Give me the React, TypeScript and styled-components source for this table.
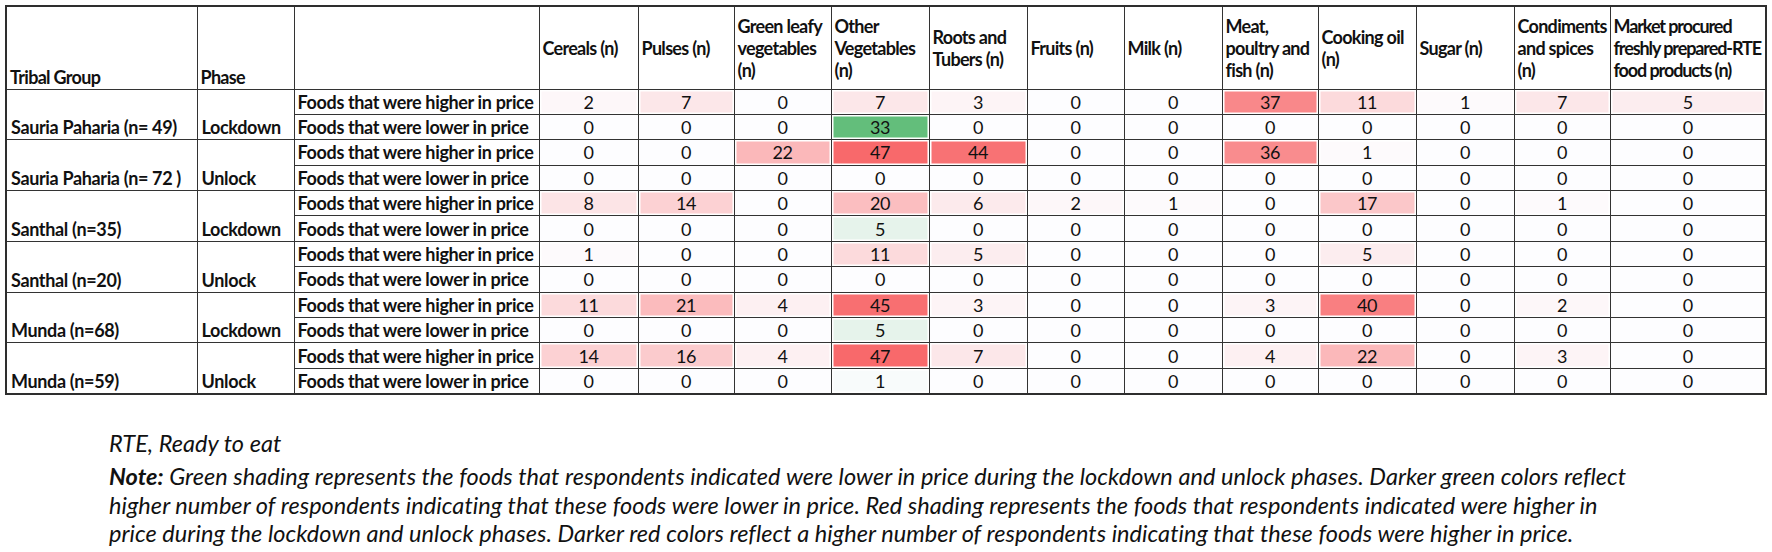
import React from "react";
import styled, { createGlobalStyle } from "styled-components";

const GlobalStyle = createGlobalStyle`
  html, body { margin: 0; padding: 0; background: #ffffff; }
  body { font-family: Lato, "Open Sans", Arial, sans-serif; color: #111; }
`;

const Page = styled.div`
  width: 1772px;
  height: 552px;
  padding: 5px 0 0 5px;
  box-sizing: border-box;
  overflow: hidden;
`;

const Table = styled.table`
  border-collapse: collapse;
  table-layout: fixed;
  width: 1760px;
  border: 2px solid #2e2e2e;
  font-size: 18px;
  letter-spacing: -0.35px;
`;

const HeadRow = styled.tr`
  height: 83px;
`;

const BodyRow = styled.tr`
  height: 25.4px;
`;

const HeadCell = styled.th<{ $valign?: "bottom" | "middle"; $tight?: boolean }>`
  border: 1px solid #333;
  text-align: left;
  font-weight: 700;
  line-height: 22px;
  letter-spacing: ${(p) => (p.$tight ? "-1.1px" : "-0.7px")};
  white-space: nowrap;
  padding: 0 1px ${(p) => (p.$valign === "bottom" ? "1px" : "0")} 3px;
  vertical-align: ${(p) => p.$valign ?? "middle"};
  overflow: hidden;
`;

const GroupCell = styled.td`
  border: 1px solid #333;
  font-weight: 700;
  vertical-align: bottom;
  padding: 0 3px 1px 4px;
  line-height: 22px;
  white-space: nowrap;
`;

const LabelCell = styled.td`
  border: 1px solid #333;
  font-weight: 700;
  padding: 0 3px 0 3px;
  line-height: 22px;
  white-space: nowrap;
`;

const NumCell = styled.td<{ $bg: string; $tinted: boolean }>`
  border: 1px solid #333;
  text-align: center;
  padding: 0;
  line-height: 22px;
  background: ${(p) => p.$bg};
  box-shadow: ${(p) => (p.$tinted ? "inset 0 0 0 1.5px #ffffff" : "none")};
`;

const Notes = styled.div`
  margin: 34px 0 0 104px;
  font-size: 23.5px;
  font-style: italic;
  line-height: 28.5px;
  letter-spacing: 0.05px;
  color: #111;
`;

const NoteLine = styled.div<{ $gap?: number }>`
  margin-bottom: ${(p) => p.$gap ?? 0}px;
  white-space: nowrap;
`;

const Bold = styled.span`
  font-weight: 700;
`;

const widths = [191, 97, 245, 99, 96, 97, 98, 98, 97, 98, 96, 98, 98, 96, 156];

const headers: string[][] = [
  ["Cereals (n)"],
  ["Pulses (n)"],
  ["Green leafy", "vegetables", "(n)"],
  ["Other", "Vegetables", "(n)"],
  ["Roots and", "Tubers (n)"],
  ["Fruits (n)"],
  ["Milk (n)"],
  ["Meat,", "poultry and", "fish (n)"],
  ["Cooking oil", "(n)"],
  ["Sugar (n)"],
  ["Condiments", "and spices", "(n)"],
  ["Market procured", "freshly prepared-RTE", "food products (n)"],
];

type Group = { name: string; phase: string; higher: number[]; lower: number[] };

const zeros = [0, 0, 0, 0, 0, 0, 0, 0, 0, 0, 0, 0];

const groups: Group[] = [
  {
    name: "Sauria Paharia (n= 49)",
    phase: "Lockdown",
    higher: [2, 7, 0, 7, 3, 0, 0, 37, 11, 1, 7, 5],
    lower: [0, 0, 0, 33, 0, 0, 0, 0, 0, 0, 0, 0],
  },
  {
    name: "Sauria Paharia (n= 72 )",
    phase: "Unlock",
    higher: [0, 0, 22, 47, 44, 0, 0, 36, 1, 0, 0, 0],
    lower: zeros,
  },
  {
    name: "Santhal (n=35)",
    phase: "Lockdown",
    higher: [8, 14, 0, 20, 6, 2, 1, 0, 17, 0, 1, 0],
    lower: [0, 0, 0, 5, 0, 0, 0, 0, 0, 0, 0, 0],
  },
  {
    name: "Santhal (n=20)",
    phase: "Unlock",
    higher: [1, 0, 0, 11, 5, 0, 0, 0, 5, 0, 0, 0],
    lower: zeros,
  },
  {
    name: "Munda (n=68)",
    phase: "Lockdown",
    higher: [11, 21, 4, 45, 3, 0, 0, 3, 40, 0, 2, 0],
    lower: [0, 0, 0, 5, 0, 0, 0, 0, 0, 0, 0, 0],
  },
  {
    name: "Munda (n=59)",
    phase: "Unlock",
    higher: [14, 16, 4, 47, 7, 0, 0, 4, 22, 0, 3, 0],
    lower: [0, 0, 0, 1, 0, 0, 0, 0, 0, 0, 0, 0],
  },
];

const WHITE = [253, 253, 255];
const RED = [248, 105, 107];
const GREEN = [99, 190, 123];

function shade(v: number, kind: "higher" | "lower"): string {
  if (v === 0) return "#fdfdff";
  const max = kind === "higher" ? 47 : 33;
  const target = kind === "higher" ? RED : GREEN;
  const t = Math.min(1, v / max);
  const c = WHITE.map((w, i) => Math.round(w + (target[i] - w) * t));
  return `rgb(${c[0]}, ${c[1]}, ${c[2]})`;
}

const Numbers: React.FC<{ values: number[]; kind: "higher" | "lower" }> = ({ values, kind }) => (
  <>
    {values.map((v, i) => (
      <NumCell key={i} $bg={shade(v, kind)} $tinted={v !== 0}>
        {v}
      </NumCell>
    ))}
  </>
);

export default function App() {
  return (
    <>
      <GlobalStyle />
      <Page>
        <Table>
          <colgroup>
            {widths.map((w, i) => (
              <col key={i} style={{ width: w }} />
            ))}
          </colgroup>
          <thead>
            <HeadRow>
              <HeadCell $valign="bottom">Tribal Group</HeadCell>
              <HeadCell $valign="bottom">Phase</HeadCell>
              <HeadCell />
              {headers.map((lines, i) => (
                <HeadCell key={i} $tight={i === headers.length - 1}>
                  {lines.map((l, j) => (
                    <React.Fragment key={j}>
                      {j > 0 && <br />}
                      {l}
                    </React.Fragment>
                  ))}
                </HeadCell>
              ))}
            </HeadRow>
          </thead>
          <tbody>
            {groups.map((g) => (
              <React.Fragment key={g.name}>
                <BodyRow>
                  <GroupCell rowSpan={2}>{g.name}</GroupCell>
                  <GroupCell rowSpan={2}>{g.phase}</GroupCell>
                  <LabelCell>Foods that were higher in price</LabelCell>
                  <Numbers values={g.higher} kind="higher" />
                </BodyRow>
                <BodyRow>
                  <LabelCell>Foods that were lower in price</LabelCell>
                  <Numbers values={g.lower} kind="lower" />
                </BodyRow>
              </React.Fragment>
            ))}
          </tbody>
        </Table>
        <Notes>
          <NoteLine $gap={5}>RTE, Ready to eat</NoteLine>
          <NoteLine>
            <Bold>Note:</Bold> Green shading represents the foods that respondents indicated were lower in price during the lockdown and unlock phases. Darker green colors reflect
          </NoteLine>
          <NoteLine>
            higher number of respondents indicating that these foods were lower in price. Red shading represents the foods that respondents indicated were higher in
          </NoteLine>
          <NoteLine>
            price during the lockdown and unlock phases. Darker red colors reflect a higher number of respondents indicating that these foods were higher in price.
          </NoteLine>
        </Notes>
      </Page>
    </>
  );
}
